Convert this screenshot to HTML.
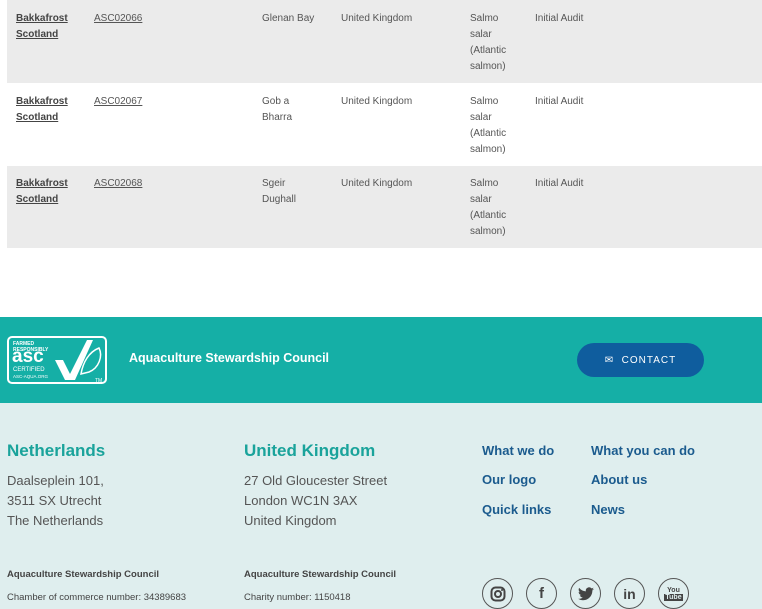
<!DOCTYPE html>
<html><head><meta charset="utf-8"><style>
*{margin:0;padding:0;box-sizing:border-box}
body{width:762px;height:609px;overflow:hidden;background:#fff;font-family:"Liberation Sans",sans-serif;color:#555;position:relative}
.row{position:absolute;left:7px;width:755px;height:83px}
.g{background:#ebebeb}
.c{position:absolute;font-size:10px;line-height:16px;color:#555}
.c a{color:#444;text-decoration:underline}
.b{font-weight:bold}
.teal{position:absolute;top:317px;left:0;width:762px;height:86px;background:#15afa6}
.light{position:absolute;top:403px;left:0;width:762px;height:206px;background:#dfeeee}
.h{position:absolute;font-size:17px;font-weight:bold;color:#1aa39b}
.addr{position:absolute;font-size:13px;line-height:20px;color:#555}
.lk{position:absolute;font-size:13px;font-weight:bold;color:#1b5b8e}
.sm{position:absolute;font-size:9.5px;color:#444}
.ic{position:absolute;top:578px;width:31px;height:31px;border:1.5px solid #555;border-radius:50%;display:flex;align-items:center;justify-content:center;color:#444;font-weight:bold;font-size:15px}
</style></head><body>
<div class="row g" style="top:0"></div>
<div class="row" style="top:83px"></div>
<div class="row g" style="top:166px;height:82px"></div>

<div class="c b" style="left:16px;top:11px"><a>Bakkafrost<br>Scotland</a></div>
<div class="c" style="left:94px;top:11px"><a style="color:#555">ASC02066</a></div>
<div class="c" style="left:262px;top:11px">Glenan Bay</div>
<div class="c" style="left:341px;top:11px">United Kingdom</div>
<div class="c" style="left:470px;top:11px">Salmo<br>salar<br>(Atlantic<br>salmon)</div>
<div class="c" style="left:535px;top:11px">Initial Audit</div>

<div class="c b" style="left:16px;top:94px"><a>Bakkafrost<br>Scotland</a></div>
<div class="c" style="left:94px;top:94px"><a style="color:#555">ASC02067</a></div>
<div class="c" style="left:262px;top:94px">Gob a<br>Bharra</div>
<div class="c" style="left:341px;top:94px">United Kingdom</div>
<div class="c" style="left:470px;top:94px">Salmo<br>salar<br>(Atlantic<br>salmon)</div>
<div class="c" style="left:535px;top:94px">Initial Audit</div>

<div class="c b" style="left:16px;top:176px"><a>Bakkafrost<br>Scotland</a></div>
<div class="c" style="left:94px;top:176px"><a style="color:#555">ASC02068</a></div>
<div class="c" style="left:262px;top:176px">Sgeir<br>Dughall</div>
<div class="c" style="left:341px;top:176px">United Kingdom</div>
<div class="c" style="left:470px;top:176px">Salmo<br>salar<br>(Atlantic<br>salmon)</div>
<div class="c" style="left:535px;top:176px">Initial Audit</div>

<div class="teal">
 <div style="position:absolute;left:7px;top:19px;width:100px;height:48px;border:2px solid #fff;border-radius:5px;color:#fff">
  <div style="position:absolute;left:4px;top:3px;font-size:5px;font-weight:bold;line-height:6px">FARMED<br>RESPONSIBLY</div>
  <div style="position:absolute;left:3px;top:10px;font-size:19px;font-weight:bold;line-height:18px">asc</div>
  <div style="position:absolute;left:4px;top:29px;font-size:6px;line-height:6px">CERTIFIED</div>
  <div style="position:absolute;left:4px;top:36px;font-size:4.5px">ASC-AQUA.ORG</div>
  <svg style="position:absolute;left:42px;top:0" width="56" height="46" viewBox="0 0 56 46"><path d="M4 22 L14 42 L24 42 L42 2 L36 2 L19 36 L12 22 Z" fill="#fff"/><path d="M30 36 C32 24 38 14 48 10 C52 18 48 30 38 34 Z" fill="none" stroke="#fff" stroke-width="1.5"/><text x="44" y="44" font-size="5" fill="#fff" font-family="Liberation Sans">TM</text></svg>
 </div>
 <div style="position:absolute;left:129px;top:34px;font-size:12.5px;font-weight:bold;color:#fff">Aquaculture Stewardship Council</div>
 <div style="position:absolute;left:577px;top:26px;width:127px;height:34px;border-radius:17px;background:#0f5d9e;color:#fff;font-size:10px;letter-spacing:1px;display:flex;align-items:center;justify-content:center">✉&nbsp; CONTACT</div>
</div>

<div class="light"></div>
<div class="h" style="left:7px;top:441px">Netherlands</div>
<div class="addr" style="left:7px;top:471px">Daalseplein 101,<br>3511 SX Utrecht<br>The Netherlands</div>
<div class="h" style="left:244px;top:441px">United Kingdom</div>
<div class="addr" style="left:244px;top:471px">27 Old Gloucester Street<br>London WC1N 3AX<br>United Kingdom</div>
<div class="lk" style="left:482px;top:443px">What we do</div>
<div class="lk" style="left:482px;top:472px">Our logo</div>
<div class="lk" style="left:482px;top:502px">Quick links</div>
<div class="lk" style="left:591px;top:443px">What you can do</div>
<div class="lk" style="left:591px;top:472px">About us</div>
<div class="lk" style="left:591px;top:502px">News</div>
<div class="sm b" style="left:7px;top:569px">Aquaculture Stewardship Council</div>
<div class="sm" style="left:7px;top:592px">Chamber of commerce number: 34389683</div>
<div class="sm b" style="left:244px;top:569px">Aquaculture Stewardship Council</div>
<div class="sm" style="left:244px;top:592px">Charity number: 1150418</div>
<div class="ic" style="left:482px"><svg width="16" height="16" viewBox="0 0 16 16"><rect x="1.5" y="1.5" width="13" height="13" rx="4" fill="none" stroke="#444" stroke-width="2"/><circle cx="8" cy="8" r="3" fill="none" stroke="#444" stroke-width="2"/><circle cx="12" cy="4" r="1" fill="#444"/></svg></div>
<div class="ic" style="left:526px">f</div>
<div class="ic" style="left:570px"><svg width="16" height="14" viewBox="0 0 24 20"><path d="M24 2.4a10 10 0 0 1-2.8.8A5 5 0 0 0 23.3.4a10 10 0 0 1-3.1 1.2A4.9 4.9 0 0 0 11.8 6 14 14 0 0 1 1.7.9a4.9 4.9 0 0 0 1.5 6.6A5 5 0 0 1 1 6.9a4.9 4.9 0 0 0 3.9 4.8 5 5 0 0 1-2.2.1 4.9 4.9 0 0 0 4.6 3.4A9.9 9.9 0 0 1 0 17.2 14 14 0 0 0 7.5 19.4c9.1 0 14-7.5 14-14v-.6A10 10 0 0 0 24 2.4z" fill="#444"/></svg></div>
<div class="ic" style="left:614px;font-size:14px">in</div>
<div class="ic" style="left:658px;font-size:7px;line-height:7px;flex-direction:column">You<span style="background:#444;color:#dfeeee;padding:0 1px">Tube</span></div>
</body></html>
